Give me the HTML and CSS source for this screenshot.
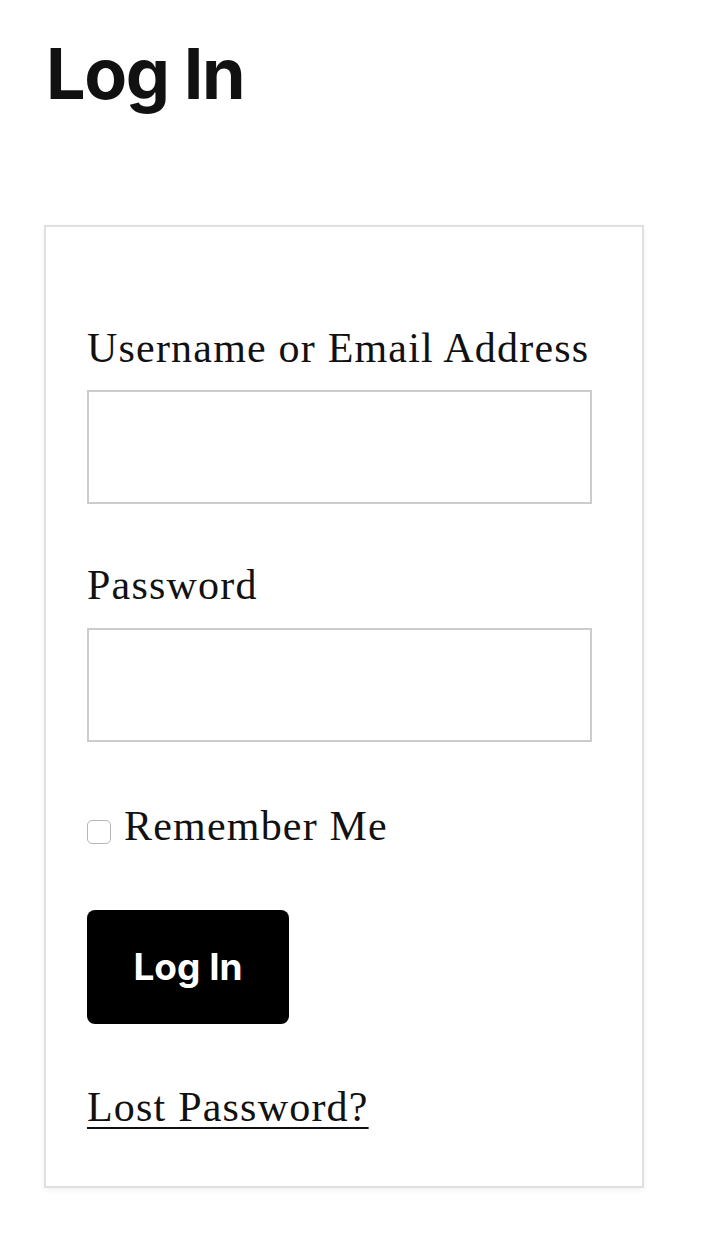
FILE: index.html
```html
<!DOCTYPE html>
<html lang="en">
<head>
    <meta charset="UTF-8">
    <meta name="viewport" content="width=device-width, initial-scale=1.0">
    <title>Log In</title>
    <link rel="stylesheet" href="styles.css">
</head>
<body>

<main class="page">
    <h1 class="page-title">Log In</h1>

    <form class="login-form">
        <div class="field">
            <label for="user_login">Username or Email Address</label>
            <input type="text" id="user_login" name="log">
        </div>
        <div class="field">
            <label for="user_pass">Password</label>
            <input type="password" id="user_pass" name="pwd">
        </div>
        <div class="remember">
            <input type="checkbox" id="rememberme" name="rememberme">
            <label for="rememberme">Remember Me</label>
        </div>
        <button type="submit" class="btn-login">Log In</button>
        <p class="lost">
            <a href="#">Lost Password?</a>
        </p>
    </form>
</main>

</body>
</html>
```

FILE: styles.css
```css
body {
    margin: 0;
    padding: 0;
    background-color: #fff;
    color: #111;
}

.page {
    padding: 39px 44px 60px;
}

.page-title {
    font-family: 'Inter', 'Liberation Sans', sans-serif;
    font-weight: 700;
    font-size: 70px;
    letter-spacing: -0.02em;
    line-height: 1;
    margin: 0 0 116px;
    padding-left: 2px;
    color: #111;
}

.login-form {
    width: 600px;
    box-sizing: border-box;
    border: 2px solid #e0e0e0;
    box-shadow: 0 2px 6px rgba(0, 0, 0, 0.06);
    padding: 96px 41px 54px;
    font-family: 'Liberation Serif', serif;
    font-size: 42px;
    letter-spacing: 1.2px;
}

.field {
    display: flex;
    flex-direction: column;
    margin-bottom: 56px;
}

.field label {
    line-height: 1.2;
    margin-bottom: 17px;
}

.field input {
    width: 505px;
    height: 114px;
    box-sizing: border-box;
    border: 2px solid #ccc;
    margin: 0;
    font-size: 30px;
}

.remember {
    display: flex;
    align-items: center;
    gap: 13px;
    padding-top: 4px;
}

.remember input {
    appearance: none;
    width: 24px;
    height: 24px;
    margin: 12px 0 0;
    border: 1px solid #b5b5b5;
    border-radius: 5px;
    background: #fff;
}

.btn-login {
    display: block;
    margin-top: 60px;
    width: 202px;
    height: 114px;
    border: none;
    border-radius: 8px;
    background: #000;
    color: #fff;
    font-family: 'Inter', 'Liberation Sans', sans-serif;
    font-weight: 700;
    font-size: 37px;
    letter-spacing: 0;
    cursor: pointer;
}

.lost {
    margin: 58px 0 0;
    line-height: 1.2;
}

.lost a {
    color: #111;
    text-decoration: underline;
    text-decoration-thickness: 2px;
    text-underline-offset: 6px;
}
```
